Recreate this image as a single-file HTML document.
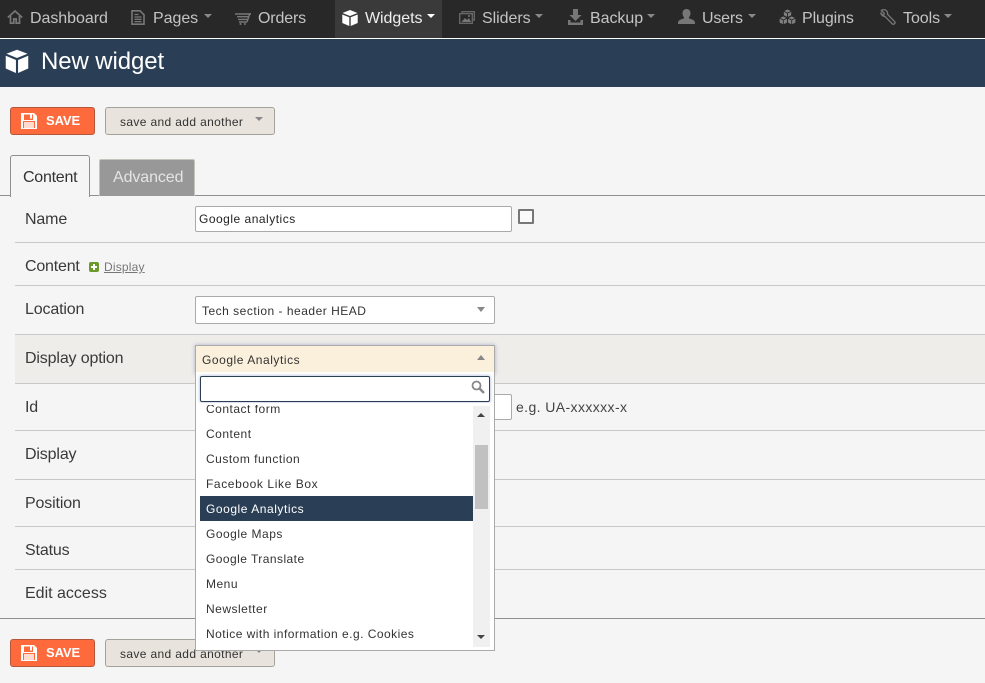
<!DOCTYPE html>
<html><head><meta charset="utf-8"><style>
html,body{margin:0;padding:0;width:985px;height:683px;overflow:hidden;background:#f5f5f5;font-family:"Liberation Sans",sans-serif;}
.a{position:absolute;white-space:nowrap}
.nav{font-size:16px;color:#c4c4c4;line-height:20px;top:9px;letter-spacing:-.05px}
.ic{position:absolute;top:9px}
.car{position:absolute;top:14px;width:0;height:0;border-left:4px solid transparent;border-right:4px solid transparent;border-top:4px solid #888}
.lbl{font-size:16px;color:#3a3a3a;line-height:20px;left:25px;letter-spacing:-.15px}
.ln{position:absolute;left:15px;right:0;height:1px;background:#c8c8c8}
.sm{font-size:12px;letter-spacing:.5px;color:#333;line-height:16px}
.save{position:absolute;left:10px;width:83px;height:26px;background:#ff6a3d;border:1px solid #b5563a;border-radius:3px}
.save span{position:absolute;left:35px;top:5px;font-size:13px;font-weight:bold;color:#fff;line-height:16px;letter-spacing:-.1px}
.save svg{position:absolute;left:10px;top:5px}
.btn2{position:absolute;left:105px;width:168px;height:26px;background:#e8e3dc;border:1px solid #a5a29b;border-radius:3px}
.btn2 span{position:absolute;left:14px;top:6px;letter-spacing:.36px}
.btn2 i{position:absolute;left:149px;top:9px;width:0;height:0;border-left:4px solid transparent;border-right:4px solid transparent;border-top:4px solid #888}
.it{position:absolute;left:206px}
</style></head><body>
<div class="a" style="left:0;top:0;width:985px;height:38px;background:#282828"></div>
<div class="a" style="left:0;top:38px;width:985px;height:1px;background:#fff"></div>
<div class="a" style="left:0;top:39px;width:985px;height:48px;background:#2a3f56"></div>
<div class="a" style="left:335px;top:0;width:107px;height:38px;background:#3a3a3a"></div>

<svg class="ic" style="left:7px;top:10px" width="16" height="14" viewBox="0 0 16 14"><path d="M.8 7.500 8 1l7.200 6.500M3.500 6v7.200h3.300V9h2.400v4.200h3.300V6" fill="none" stroke="#777" stroke-width="1.700"/></svg>
<div class="a nav" style="left:30px">Dashboard</div>
<svg class="ic" style="left:131px;top:10px" width="14" height="15" viewBox="0 0 14 15"><path d="M1 .8h8l4 4v9.400H1z" fill="none" stroke="#777" stroke-width="1.600"/><path d="M3.500 4.500h4M3.500 7h7M3.500 9.300h7M3.500 11.600h7" stroke="#777" stroke-width="1.300"/></svg>
<div class="a nav" style="left:153px">Pages</div><div class="car" style="left:204px"></div>
<svg class="ic" style="left:235px;top:13px" width="16" height="12" viewBox="0 0 16 12"><path d="M0 1h16M2 3.700h12M3 6.400h9.500M4 9h8" stroke="#777" stroke-width="1.400" fill="none"/><path d="M15 0l-3 9" stroke="#777" stroke-width="1.400"/><circle cx="5.500" cy="11" r="1" fill="#777"/><circle cx="10" cy="11" r="1" fill="#777"/></svg>
<div class="a nav" style="left:258px;letter-spacing:-.15px">Orders</div>
<svg class="ic" style="left:342px;top:10px" width="16" height="16" viewBox="0 0 16 16"><path d="M8 0 15.500 3 8 6 .5 3zM.3 4.500 7.300 7.300V16L.3 13zM15.700 4.500 8.700 7.300V16L15.700 13z" fill="#fff"/></svg>
<div class="a nav" style="left:365px;color:#eee">Widgets</div><div class="car" style="left:427px;border-top-color:#fff"></div>
<svg class="ic" style="left:459px;top:11px" width="16" height="13" viewBox="0 0 16 13"><path d="M3 2.500V.7h12.300V9h-2M.7 2.700h12.600v9.600H.7z" fill="none" stroke="#666" stroke-width="1.400"/><path d="M2.500 11 6 7l2 2 2-2 2 4z" fill="#777"/><circle cx="10" cy="5" r="1" fill="#777"/></svg>
<div class="a nav" style="left:482px">Sliders</div><div class="car" style="left:535px"></div>
<svg class="ic" style="left:568px" width="15" height="16" viewBox="0 0 15 16"><path d="M5 0h5v6h3.500L7.500 12 1.500 6H5zM0 11h2.500v2.500h10V11H15v5H0z" fill="#777"/></svg>
<div class="a nav" style="left:590px">Backup</div><div class="car" style="left:647px"></div>
<svg class="ic" style="left:678px" width="17" height="15" viewBox="0 0 17 15"><path d="M8.500 0c2.600 0 4 2 4 4.300S11 8 10.800 9.300c2 1 6.200 1.300 6.200 4.700v1H0v-1c0-3.400 4.200-3.700 6.200-4.700C6 8 4.500 6.800 4.500 4.300S5.900 0 8.500 0z" fill="#777"/></svg>
<div class="a nav" style="left:702px;letter-spacing:-.2px">Users</div><div class="car" style="left:748px"></div>
<svg class="ic" style="left:779px" width="17" height="16" viewBox="0 0 17 16"><g fill="#808080" stroke="#282828" stroke-width=".7"><path d="M8.500 0l4 2v4.500l-4 2-4-2V2z"/><path d="M4.300 7l4 2v4.800l-4 2-4-2V9z"/><path d="M12.700 7l4 2v4.800l-4 2-4-2V9z"/></g><path d="M4.800 2.300l3.700 1.800 3.700-1.800M8.500 4v4.300M.6 9.200l3.700 1.800L8 9.200M4.300 11v4.500M9 9.200l3.700 1.800 3.700-1.800M12.700 11v4.500" fill="none" stroke="#282828" stroke-width=".9"/></svg>
<div class="a nav" style="left:802px;letter-spacing:-.1px">Plugins</div>
<svg class="ic" style="left:880px" width="16" height="16" viewBox="0 0 16 16"><path d="M4.800.8a4 4 0 0 0-3.500.7L4.200 4.300 4 5.800l-1.700.3L.8 3.500A4.200 4.200 0 0 0 5 7.500l7.500 7.500c1 1 3.300-.9 2.300-2.200L7.500 5.300C8 3.300 6.700 1.300 4.800.8z" fill="none" stroke="#777" stroke-width="1.300"/></svg>
<div class="a nav" style="left:903px">Tools</div><div class="car" style="left:944px"></div>

<svg class="a" style="left:5px;top:49px" width="24" height="24" viewBox="0 0 16 16"><path d="M8 .5 15 3.200 8 6 1 3.200zM.5 4.500 7.300 7.300V16L.5 13zM15.500 4.500 8.700 7.300V16L15.500 13z" fill="#fff"/></svg>
<div class="a" style="left:41px;top:48px;font-size:24px;line-height:28px;color:#fff;letter-spacing:-.1px">New widget</div>

<div class="save" style="top:107px"><svg width="16" height="16" viewBox="0 0 16 16"><path d="M0 0h13l3 3v13H0z" fill="#fff"/><path d="M3 1.500h9v5.500H3zM2 8h12v7H2z" fill="#ff6a3d"/><path d="M3 9h10v6H3z" fill="#ffdccf"/><path d="M9 1.500h2v4H9z" fill="#fff"/></svg><span>SAVE</span></div>
<div class="btn2 sm" style="top:107px"><span>save and add another</span><i></i></div>

<div class="a" style="left:0;top:195px;width:985px;height:1px;background:#8f8f8f"></div>
<div class="a" style="left:10px;top:155px;width:78px;height:41px;background:#f5f5f5;border:1px solid #8f8f8f;border-bottom:none;border-radius:3px 3px 0 0"></div>
<div class="a" style="left:23px;top:168px;font-size:16px;line-height:20px;color:#333;letter-spacing:-.25px">Content</div>
<div class="a" style="left:99px;top:159px;width:94px;height:36px;background:#989898;border:1px solid #c4c4bc;border-bottom:none;border-radius:2px 2px 0 0"></div>
<div class="a" style="left:113px;top:168px;font-size:16px;line-height:20px;color:#e4e4e4;letter-spacing:-.1px">Advanced</div>

<div class="a lbl" style="top:210px">Name</div>
<div class="a" style="left:195px;top:206px;width:315px;height:24px;background:#fff;border:1px solid #aaa;border-radius:2px"></div>
<div class="a sm" style="left:199px;top:211px;color:#222">Google analytics</div>
<div class="a" style="left:518px;top:209px;width:12px;height:11px;background:#fafafa;border:2px solid #777;border-radius:1px"></div>
<div class="ln" style="top:242px"></div>

<div class="a lbl" style="top:257px;letter-spacing:-.2px">Content</div>
<svg class="a" style="left:89px;top:262px" width="10" height="10" viewBox="0 0 10 10"><rect width="10" height="10" rx="2" fill="#6a9a2a"/><path d="M5 2v6M2 5h6" stroke="#fff" stroke-width="2"/></svg>
<div class="a" style="left:104px;top:259px;font-size:12px;line-height:16px;color:#777;text-decoration:underline;letter-spacing:.2px">Display</div>
<div class="ln" style="top:285px"></div>

<div class="a lbl" style="top:300px">Location</div>
<div class="a" style="left:195px;top:296px;width:298px;height:26px;background:#fff;border:1px solid #aaa;border-radius:2px"></div>
<div class="a sm" style="left:202px;top:303px">Tech section - header HEAD</div>
<div class="a" style="left:477px;top:307px;width:0;height:0;border-left:4px solid transparent;border-right:4px solid transparent;border-top:5px solid #888"></div>

<div class="a" style="left:15px;top:334px;width:970px;height:49px;background:#eeedea;border-top:1px solid #c8c8c8;box-sizing:border-box"></div>
<div class="a lbl" style="top:349px">Display option</div>
<div class="ln" style="top:383px"></div>

<div class="a lbl" style="top:398px">Id</div>
<div class="a" style="left:480px;top:394px;width:30px;height:24px;background:#fff;border:1px solid #aaa;border-radius:2px"></div>
<div class="a" style="left:516px;top:398px;font-size:14px;line-height:18px;color:#444;letter-spacing:.4px">e.g. UA-xxxxxx-x</div>
<div class="ln" style="top:430px"></div>

<div class="a lbl" style="top:445px">Display</div>
<div class="ln" style="top:479px"></div>
<div class="a lbl" style="top:494px">Position</div>
<div class="ln" style="top:526px"></div>
<div class="a lbl" style="top:541px">Status</div>
<div class="ln" style="top:569px"></div>
<div class="a lbl" style="top:584px;letter-spacing:0">Edit access</div>
<div class="a" style="left:0;top:618px;width:985px;height:1px;background:#8f8f8f"></div>

<div class="save" style="top:639px"><svg width="16" height="16" viewBox="0 0 16 16"><path d="M0 0h13l3 3v13H0z" fill="#fff"/><path d="M3 1.500h9v5.500H3zM2 8h12v7H2z" fill="#ff6a3d"/><path d="M3 9h10v6H3z" fill="#ffdccf"/><path d="M9 1.500h2v4H9z" fill="#fff"/></svg><span>SAVE</span></div>
<div class="btn2 sm" style="top:639px"><span>save and add another</span><i></i></div>

<!-- select -->
<div class="a" style="left:195px;top:345px;width:298px;height:28px;background:#fbf0dc;border:1px solid #aaa;border-bottom:none;box-shadow:0 0 4px rgba(90,100,160,.45)"></div>
<div class="a sm" style="left:202px;top:352px;letter-spacing:.55px">Google Analytics</div>
<div class="a" style="left:477px;top:355px;width:0;height:0;border-left:4px solid transparent;border-right:4px solid transparent;border-bottom:5px solid #888"></div>
<div class="a" style="left:195px;top:372px;width:298px;height:278px;background:#fff;border:1px solid #aaa;border-top:none;overflow:hidden"></div>
<div class="a sm" style="left:206px;top:401px;">Contact form</div>
<div class="a" style="left:200px;top:376px;width:288px;height:24px;background:#fff;border:1px solid #2a3f56;border-radius:2px;box-shadow:0 0 3px rgba(70,90,170,.5)"></div>
<div class="a" style="left:196px;top:403px;width:298px;height:2px;background:#fff"></div>
<svg class="a" style="left:471px;top:380px" width="14" height="14" viewBox="0 0 14 14"><circle cx="5.500" cy="5.500" r="4" fill="none" stroke="#888" stroke-width="1.800"/><path d="M8.500 8.500 13 13" stroke="#888" stroke-width="2.400"/></svg>
<div class="a" style="left:473px;top:406px;width:17px;height:241px;background:#f0f0f0"></div>
<div class="a" style="left:475px;top:445px;width:13px;height:64px;background:#c1c1c1"></div>
<div class="a" style="left:477px;top:413px;width:0;height:0;border-left:4px solid transparent;border-right:4px solid transparent;border-bottom:4px solid #444"></div>
<div class="a" style="left:477px;top:635px;width:0;height:0;border-left:4px solid transparent;border-right:4px solid transparent;border-top:4px solid #444"></div>
<div class="a" style="left:200px;top:496px;width:273px;height:25px;background:#2a3f56"></div>
<div class="a sm it" style="top:426px">Content</div>
<div class="a sm it" style="top:451px">Custom function</div>
<div class="a sm it" style="top:476px;letter-spacing:.6px">Facebook Like Box</div>
<div class="a sm it" style="top:501px;color:#fff;letter-spacing:.55px">Google Analytics</div>
<div class="a sm it" style="top:526px">Google Maps</div>
<div class="a sm it" style="top:551px;letter-spacing:.45px">Google Translate</div>
<div class="a sm it" style="top:576px">Menu</div>
<div class="a sm it" style="top:601px">Newsletter</div>
<div class="a sm it" style="top:626px;letter-spacing:.47px">Notice with information e.g. Cookies</div>
</body></html>
